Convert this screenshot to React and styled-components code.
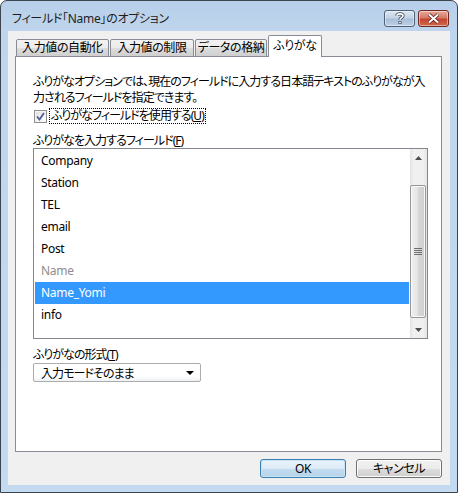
import React from "react";
import styled, { createGlobalStyle } from "styled-components";

const UI_FONT = `"Noto Sans", "Noto Sans CJK JP", sans-serif`;

const GlobalStyle = createGlobalStyle`
  html, body {
    margin: 0;
    padding: 0;
    background: #ffffff;
  }
  * {
    box-sizing: border-box;
  }
`;

const Window = styled.div`
  width: 458px;
  height: 493px;
  display: flex;
  flex-direction: column;
  padding: 0 7px 7px 7px;
  border: 1px solid #3c4450;
  border-radius: 7px 7px 0 0;
  background: linear-gradient(#b7cfe9 0px, #bfd5ed 30px, #c4daf0 100%);
  font-family: ${UI_FONT};
  font-size: 12px;
  font-feature-settings: "palt";
  letter-spacing: -0.95px;
  color: #000;
`;

const TitleBar = styled.div`
  height: 30px;
  flex: none;
  display: flex;
  align-items: center;
  justify-content: space-between;
  padding: 4px 1px 0 4px;
`;

const Title = styled.div`
  font-size: 12px;
  color: #1e1e1e;
  letter-spacing: -0.3px;
`;

const Caption = styled.div`
  display: flex;
  gap: 3px;
`;

const CaptionButton = styled.div`
  width: 31px;
  height: 17px;
  border: 1px solid ${(p) => (p.danger ? "#6e2a22" : "#4f6177")};
  border-radius: 3px;
  display: flex;
  align-items: center;
  justify-content: center;
  box-shadow: inset 0 0 0 1px rgba(255, 255, 255, 0.45);
  background: ${(p) =>
    p.danger
      ? "linear-gradient(#e9a99b 0%, #d47a68 45%, #c4452f 55%, #d06a48 100%)"
      : "linear-gradient(#dbe6f2 0%, #c3d3e5 45%, #a9bfd8 55%, #bcd0e6 100%)"};
`;

const Client = styled.div`
  flex: 1;
  display: flex;
  flex-direction: column;
  background: #f0f0f0;
  padding: 4px 0 7px 0;
`;

const TabStrip = styled.div`
  height: 22px;
  display: flex;
  align-items: flex-end;
  padding-left: 8px;
  margin-bottom: -1px;
  position: relative;
  z-index: 1;
`;

const Tab = styled.div`
  width: ${(p) => p.w}px;
  height: ${(p) => (p.active ? 22 : 18)}px;
  margin-right: ${(p) => (p.active ? 0 : 1)}px;
  border: 1px solid #898c95;
  border-bottom: ${(p) => (p.active ? "none" : "1px solid #898c95")};
  border-radius: 2px 2px 0 0;
  background: ${(p) =>
    p.active ? "#ffffff" : "linear-gradient(#f2f2f2 0%, #ebebeb 50%, #dddddd 51%, #cfcfcf 100%)"};
  display: flex;
  justify-content: center;
  padding-top: ${(p) => (p.active ? 2 : 0)}px;
  line-height: 16px;
  letter-spacing: -0.4px;
  white-space: nowrap;
`;

const Panel = styled.div`
  height: 396px;
  margin: 0 8px 0 7px;
  border: 1px solid #898c95;
  background: #ffffff;
  padding: 17px 13px 0 17px;
  display: flex;
  flex-direction: column;
`;

const Description = styled.div`
  line-height: 16px;
  white-space: nowrap;
`;

const CheckRow = styled.div`
  margin-top: 2px;
  height: 16px;
  display: flex;
  align-items: center;
  gap: 2px;
  padding-left: 1px;
`;

const CheckBox = styled.div`
  width: 13px;
  height: 13px;
  border: 1px solid #8f8f8f;
  background: linear-gradient(135deg, #dcdcdc 0%, #f4f4f4 60%, #ffffff 100%);
  box-shadow: inset 0 0 0 1px #f4f4f4;
  display: flex;
  align-items: center;
  justify-content: center;
`;

const FocusLabel = styled.span`
  height: 16px;
  line-height: 14px;
  padding: 0 1px;
  border: 1px dotted #000;
  white-space: nowrap;
`;

const Key = styled.span`
  text-decoration: underline;
  text-underline-offset: 1px;
`;

const FieldLabel = styled.div`
  margin-top: ${(p) => p.top}px;
  height: 14px;
  line-height: 14px;
  white-space: nowrap;
`;

const ListBox = styled.div`
  height: 191px;
  width: 395px;
  border: 1px solid #828790;
  display: flex;
  background: #ffffff;
`;

const Items = styled.div`
  flex: 1;
  padding: 1px;
`;

const Item = styled.div`
  height: 22px;
  line-height: 22px;
  padding-left: 6px;
  font-size: 12px;
  letter-spacing: -0.3px;
  background: ${(p) => (p.selected ? "#3399ff" : "transparent")};
  color: ${(p) => (p.selected ? "#ffffff" : p.disabled ? "#8d8d8d" : "#000000")};
`;

const ScrollBar = styled.div`
  width: 17px;
  display: flex;
  flex-direction: column;
  background: linear-gradient(90deg, #e3e3e3 0%, #f0f0f0 20%, #f0f0f0 80%, #e3e3e3 100%);
`;

const ArrowButton = styled.div`
  height: 17px;
  display: flex;
  align-items: center;
  justify-content: center;
`;

const Track = styled.div`
  flex: 1;
  padding: 19px 1px 3px 0;
  display: flex;
  flex-direction: column;
`;

const Thumb = styled.div`
  height: 133px;
  border: 1px solid #979797;
  border-radius: 2px;
  background: linear-gradient(90deg, #f1f1f1 0%, #e5e5e5 45%, #d6d6d6 55%, #cfcfcf 100%);
  box-shadow: inset 0 0 0 1px #f8f8f8;
  display: flex;
  align-items: center;
  justify-content: center;
`;

const Combo = styled.div`
  margin-top: 1px;
  width: 168px;
  height: 19px;
  border: 1px solid #acacac;
  border-radius: 2px;
  background: linear-gradient(#ffffff 0%, #ffffff 70%, #eef2f6 100%);
  display: flex;
  align-items: center;
  justify-content: space-between;
  padding: 0 6px 0 7px;
  white-space: nowrap;
`;

const ButtonRow = styled.div`
  margin-top: 7px;
  display: flex;
  justify-content: flex-end;
  gap: 10px;
  padding-right: 8px;
`;

const DialogButton = styled.div`
  width: 86px;
  height: 19px;
  border: 1px solid ${(p) => (p.primary ? "#3c7fb1" : "#707070")};
  border-radius: 3px;
  box-shadow: inset 0 0 0 1px ${(p) => (p.primary ? "#c7e4f7" : "#fcfcfc")};
  background: ${(p) =>
    p.primary
      ? "linear-gradient(#eaf4fb 0%, #dceaf5 50%, #c5dcee 51%, #b5d2ea 100%)"
      : "linear-gradient(#f2f2f2 0%, #ebebeb 50%, #dddddd 51%, #cfcfcf 100%)"};
  display: flex;
  align-items: center;
  justify-content: center;
  line-height: 16px;
  letter-spacing: -0.4px;
`;

const Triangle = ({ down, w = 7, h = 4, color = "#000" }) => (
  <svg width={w} height={h} viewBox={`0 0 ${w} ${h}`}>
    <polygon
      points={down ? `0,0 ${w},0 ${w / 2},${h}` : `0,${h} ${w},${h} ${w / 2},0`}
      fill={color}
    />
  </svg>
);

const fields = [
  { name: "Company" },
  { name: "Station" },
  { name: "TEL" },
  { name: "email" },
  { name: "Post" },
  { name: "Name", disabled: true },
  { name: "Name_Yomi", selected: true },
  { name: "info" },
];

const tabs = [
  { label: "入力値の自動化", w: 93 },
  { label: "入力値の制限", w: 84 },
  { label: "データの格納", w: 72 },
  { label: "ふりがな", w: 54, active: true },
];

export default function App() {
  return (
    <>
      <GlobalStyle />
      <Window>
        <TitleBar>
          <Title>フィールド「Name」のオプション</Title>
          <Caption>
            <CaptionButton>
              <svg width="10" height="12" viewBox="0 0 10 12">
                <path
                  d="M2 3.8 C2 1.2 8 1.2 8 3.8 C8 5.8 5 5.6 5 7.8"
                  fill="none"
                  stroke="#3a4a5c"
                  strokeWidth="3.2"
                />
                <path
                  d="M2 3.8 C2 1.2 8 1.2 8 3.8 C8 5.8 5 5.6 5 7.8"
                  fill="none"
                  stroke="#ffffff"
                  strokeWidth="1.6"
                />
                <rect x="3.5" y="9" width="3" height="3" fill="#3a4a5c" />
                <rect x="4.2" y="9.7" width="1.6" height="1.6" fill="#ffffff" />
              </svg>
            </CaptionButton>
            <CaptionButton danger>
              <svg width="13" height="11" viewBox="0 0 13 11">
                <path d="M2 1.5 L11 9.5 M11 1.5 L2 9.5" stroke="#5a2018" strokeWidth="3.6" />
                <path d="M2 1.5 L11 9.5 M11 1.5 L2 9.5" stroke="#ffffff" strokeWidth="2" />
              </svg>
            </CaptionButton>
          </Caption>
        </TitleBar>
        <Client>
          <TabStrip>
            {tabs.map((t) => (
              <Tab key={t.label} w={t.w} active={t.active}>
                {t.label}
              </Tab>
            ))}
          </TabStrip>
          <Panel>
            <Description>
              ふりがなオプションでは、現在のフィールドに入力する日本語テキストのふりがなが入
              <br />
              力されるフィールドを指定できます。
            </Description>
            <CheckRow>
              <CheckBox>
                <svg width="9" height="9" viewBox="0 0 9 9">
                  <path d="M1 4.5 L3.5 7.5 L8 1" fill="none" stroke="#4a5f97" strokeWidth="1.8" />
                </svg>
              </CheckBox>
              <FocusLabel>
                ふりがなフィールドを使用する(<Key>U</Key>)
              </FocusLabel>
            </CheckRow>
            <FieldLabel top={10}>
              ふりがなを入力するフィールド(<Key>F</Key>)
            </FieldLabel>
            <ListBox>
              <Items>
                {fields.map((f) => (
                  <Item key={f.name} selected={f.selected} disabled={f.disabled}>
                    {f.name}
                  </Item>
                ))}
              </Items>
              <ScrollBar>
                <ArrowButton>
                  <Triangle w={7} h={4} color="#4d4d4d" />
                </ArrowButton>
                <Track>
                  <Thumb>
                    <svg width="8" height="7" viewBox="0 0 8 7">
                      <path d="M0 0.5 H8 M0 2.5 H8 M0 4.5 H8 M0 6.5 H8" stroke="#6e6e6e" strokeWidth="1" />
                    </svg>
                  </Thumb>
                </Track>
                <ArrowButton>
                  <Triangle down w={7} h={4} color="#4d4d4d" />
                </ArrowButton>
              </ScrollBar>
            </ListBox>
            <FieldLabel top={9}>
              ふりがなの形式(<Key>T</Key>)
            </FieldLabel>
            <Combo>
              <span>入力モードそのまま</span>
              <Triangle down w={8} h={4} />
            </Combo>
          </Panel>
          <ButtonRow>
            <DialogButton primary>OK</DialogButton>
            <DialogButton>キャンセル</DialogButton>
          </ButtonRow>
        </Client>
      </Window>
    </>
  );
}
